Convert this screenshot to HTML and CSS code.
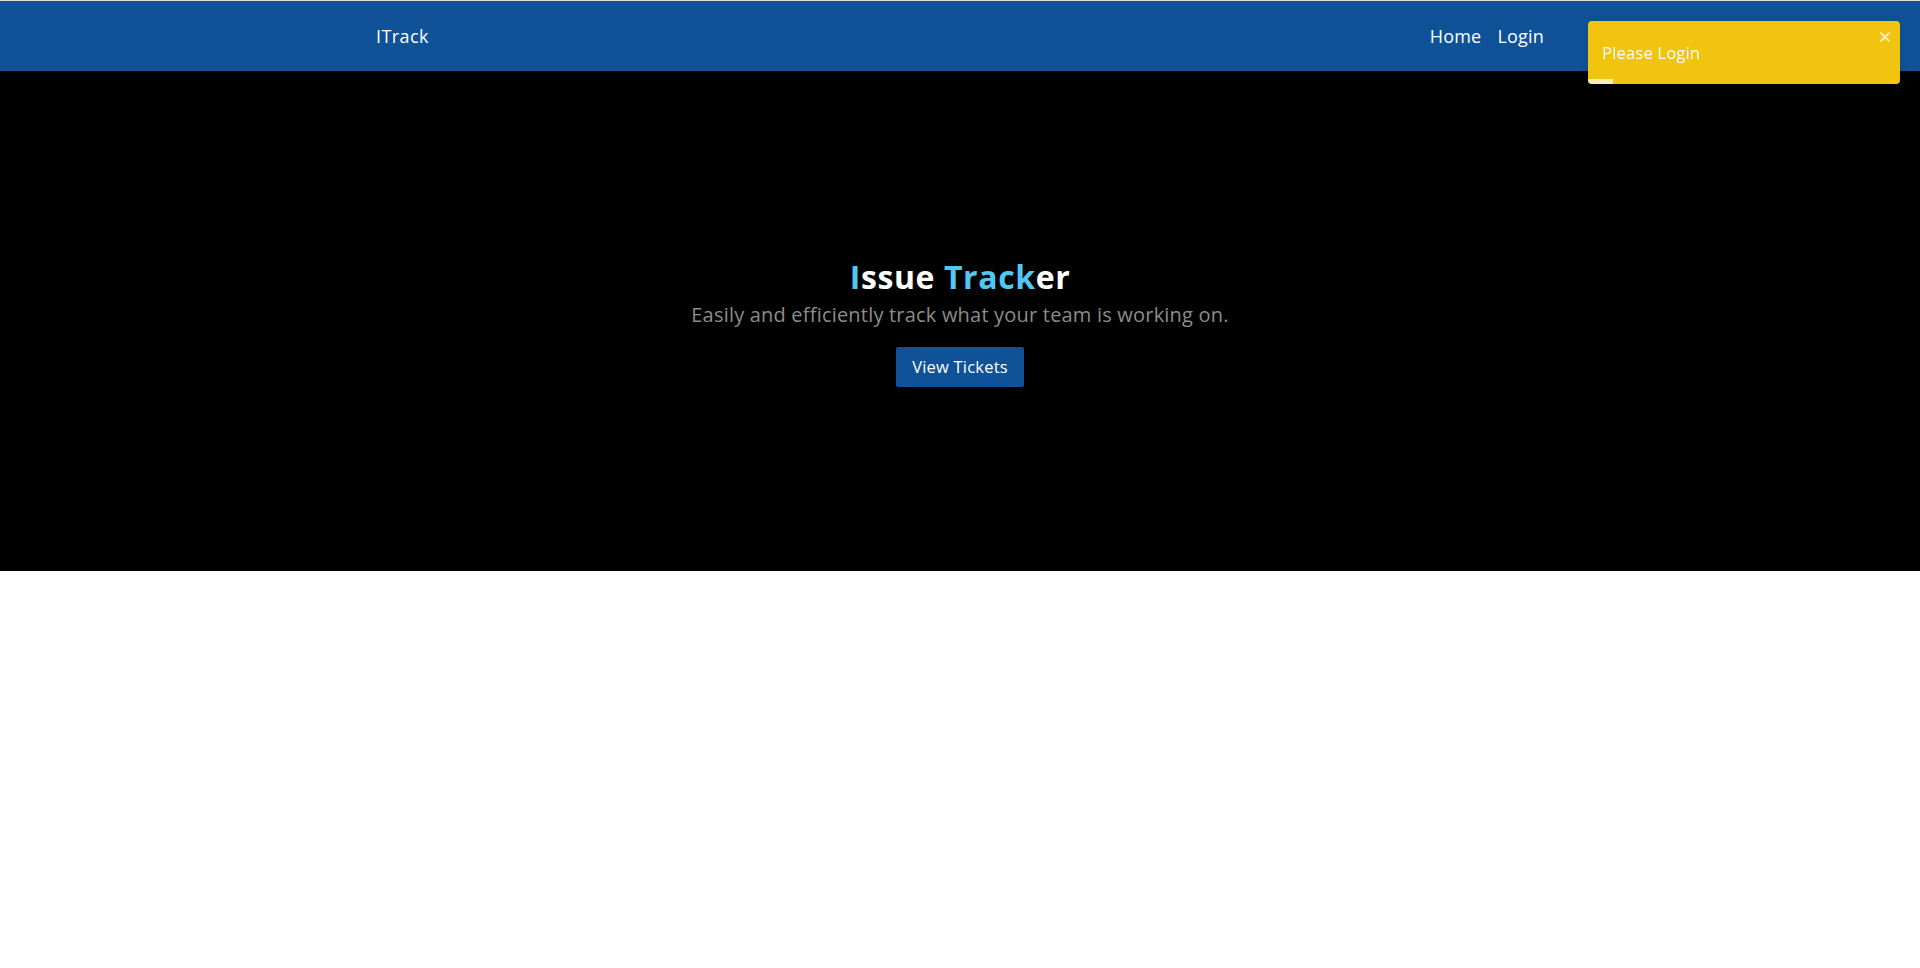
FILE: index.html
```html
<!DOCTYPE html>
<html lang="en">
<head>
<meta charset="utf-8">
<title>ITrack</title>
<link rel="stylesheet" href="styles.css">
</head>
<body>
<header class="navbar">
  <div class="container nav-inner">
    <a class="brand" href="#">ITrack</a>
    <nav class="nav-links">
      <a href="#">Home</a>
      <a href="#">Login</a>
    </nav>
  </div>
</header>
<main>
  <section class="hero">
    <h1 class="hero-title"><span class="accent">I</span>ssue <span class="accent">Track</span>er</h1>
    <p class="hero-sub">Easily and efficiently track what your team is working on.</p>
    <a class="btn" href="#">View Tickets</a>
  </section>
</main>
<div class="toast">
  <span class="toast-msg">Please Login</span>
  <button class="toast-close" aria-label="close">
    <svg viewBox="0 0 12 12" width="12" height="12"><path d="M1.5 1.5L10.5 10.5M10.5 1.5L1.5 10.5" stroke="currentColor" stroke-width="2" fill="none"/></svg>
  </button>
  <div class="toast-progress"></div>
</div>
</body>
</html>
```

FILE: styles.css
```css
* { box-sizing: border-box; }
html, body { margin: 0; padding: 0; }
body {
  font-family: "Open Sans", "Noto Sans", sans-serif;
  background: #ffffff;
  color: #222;
}
a { text-decoration: none; color: inherit; }

.navbar {
  height: 71px;
  background: #0f5298;
  border-top: 1px solid #d9d9d9;
  display: flex;
  align-items: center;
}
.container {
  width: 100%;
  max-width: 1200px;
  margin: 0 auto;
  padding: 0 16px;
}
.nav-inner {
  display: flex;
  justify-content: space-between;
  align-items: center;
}
.brand {
  color: #ffffff;
  font-size: 18px;
  letter-spacing: 0.4px;
}
.nav-links {
  display: flex;
  gap: 16px;
}
.nav-links a {
  color: #ffffff;
  font-size: 18px;
  letter-spacing: 0.2px;
}

.hero {
  height: 500px;
  background: #000000;
  display: flex;
  flex-direction: column;
  align-items: center;
  justify-content: center;
}
.hero-title {
  margin: 3px 0 0;
  font-size: 32px;
  line-height: 36px;
  font-weight: 700;
  color: #ffffff;
  letter-spacing: 0.6px;
}
.accent { color: #4fc8f5; }
.hero-sub {
  margin: 6px 0 0;
  font-size: 20px;
  line-height: 28px;
  color: #8c8c8c;
  letter-spacing: 0.2px;
}
.btn {
  margin-top: 18px;
  display: flex;
  align-items: center;
  justify-content: center;
  width: 128px;
  height: 40px;
  background: #0f5298;
  color: #ffffff;
  font-size: 16.5px;
  letter-spacing: 0.2px;
  border-radius: 2px;
}

.toast {
  position: fixed;
  top: 21px;
  right: 20px;
  width: 312px;
  height: 63px;
  background: #f1c40f;
  border-radius: 4px;
  box-shadow: 0 1px 10px rgba(0,0,0,0.1);
  overflow: hidden;
  display: flex;
  align-items: center;
  padding: 0 14px;
}
.toast-msg {
  color: #ffffff;
  font-size: 16.5px;
  font-weight: 500;
  letter-spacing: 0.2px;
}
.toast-close {
  position: absolute;
  top: 10px;
  right: 9px;
  width: 12px;
  height: 12px;
  border: 0;
  background: transparent;
  color: #ffffff;
  opacity: 0.7;
  padding: 0;
  display: flex;
  cursor: pointer;
}
.toast-progress {
  position: absolute;
  left: 0;
  bottom: 0;
  width: 25px;
  height: 5px;
  background: rgba(255,255,255,0.7);
}
```
